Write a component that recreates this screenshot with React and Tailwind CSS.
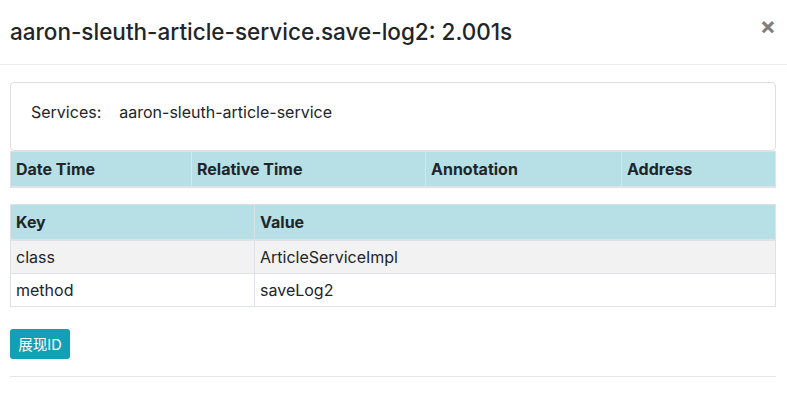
export default function App() {
  const font = "font-['Inter','Noto_Sans_CJK_SC',sans-serif]";
  const th = "border border-[#dee2e6] border-b-2 px-[5px] py-[5px] text-left font-bold leading-[24px] text-[16px]";
  const td = "border border-[#dee2e6] px-[5px] py-[4px] text-left leading-[24px] text-[16px]";
  return (
    <div className={`w-[787px] h-[401px] bg-white text-[#212529] ${font}`}>
      <div className="flex items-start justify-between h-[65px] border-b border-[#e9ecef] pl-[10px] pr-[11px]">
        <h5 className="mt-[17px] text-[22.5px] leading-[30px] font-medium">
          aaron-sleuth-article-service.save-log2: 2.001s
        </h5>
        <span className="mt-[11px] text-[24px] font-bold leading-[30px] text-[#7f7f7f]">×</span>
      </div>
      <div className="pl-[10px] pr-[11px] pt-[17px]">
        <div className="h-[69px] border border-[#dfdfdf] rounded-[4px] flex items-start pt-[17px] px-[20px] text-[16px] leading-[24px]">
          <span>Services:</span>
          <span className="ml-[18px]">aaron-sleuth-article-service</span>
        </div>
        <table className="w-full table-fixed border-collapse">
          <colgroup>
            <col className="w-[181px]" />
            <col className="w-[234px]" />
            <col className="w-[196px]" />
            <col />
          </colgroup>
          <thead>
            <tr className="bg-[#b6e0e6]">
              <th className={th}>Date Time</th>
              <th className={th}>Relative Time</th>
              <th className={th}>Annotation</th>
              <th className={th}>Address</th>
            </tr>
          </thead>
        </table>
        <table className="mt-[16px] w-full table-fixed border-collapse">
          <colgroup>
            <col className="w-[244px]" />
            <col />
          </colgroup>
          <thead>
            <tr className="bg-[#b6e0e6]">
              <th className={th}>Key</th>
              <th className={th}>Value</th>
            </tr>
          </thead>
          <tbody>
            <tr className="bg-[#f2f2f2]">
              <td className={td}>class</td>
              <td className={td}>ArticleServiceImpl</td>
            </tr>
            <tr>
              <td className={td}>method</td>
              <td className={td}>saveLog2</td>
            </tr>
          </tbody>
        </table>
        <div className="mt-[22px]">
          <button className="h-[30px] w-[60px] rounded-[3px] bg-[#139fb5] text-white text-[14.5px] leading-[21px] flex items-center justify-center">
            展现ID
          </button>
        </div>
        <div className="mt-[17px] border-t border-[#e6e6e6]" />
      </div>
    </div>
  );
}
